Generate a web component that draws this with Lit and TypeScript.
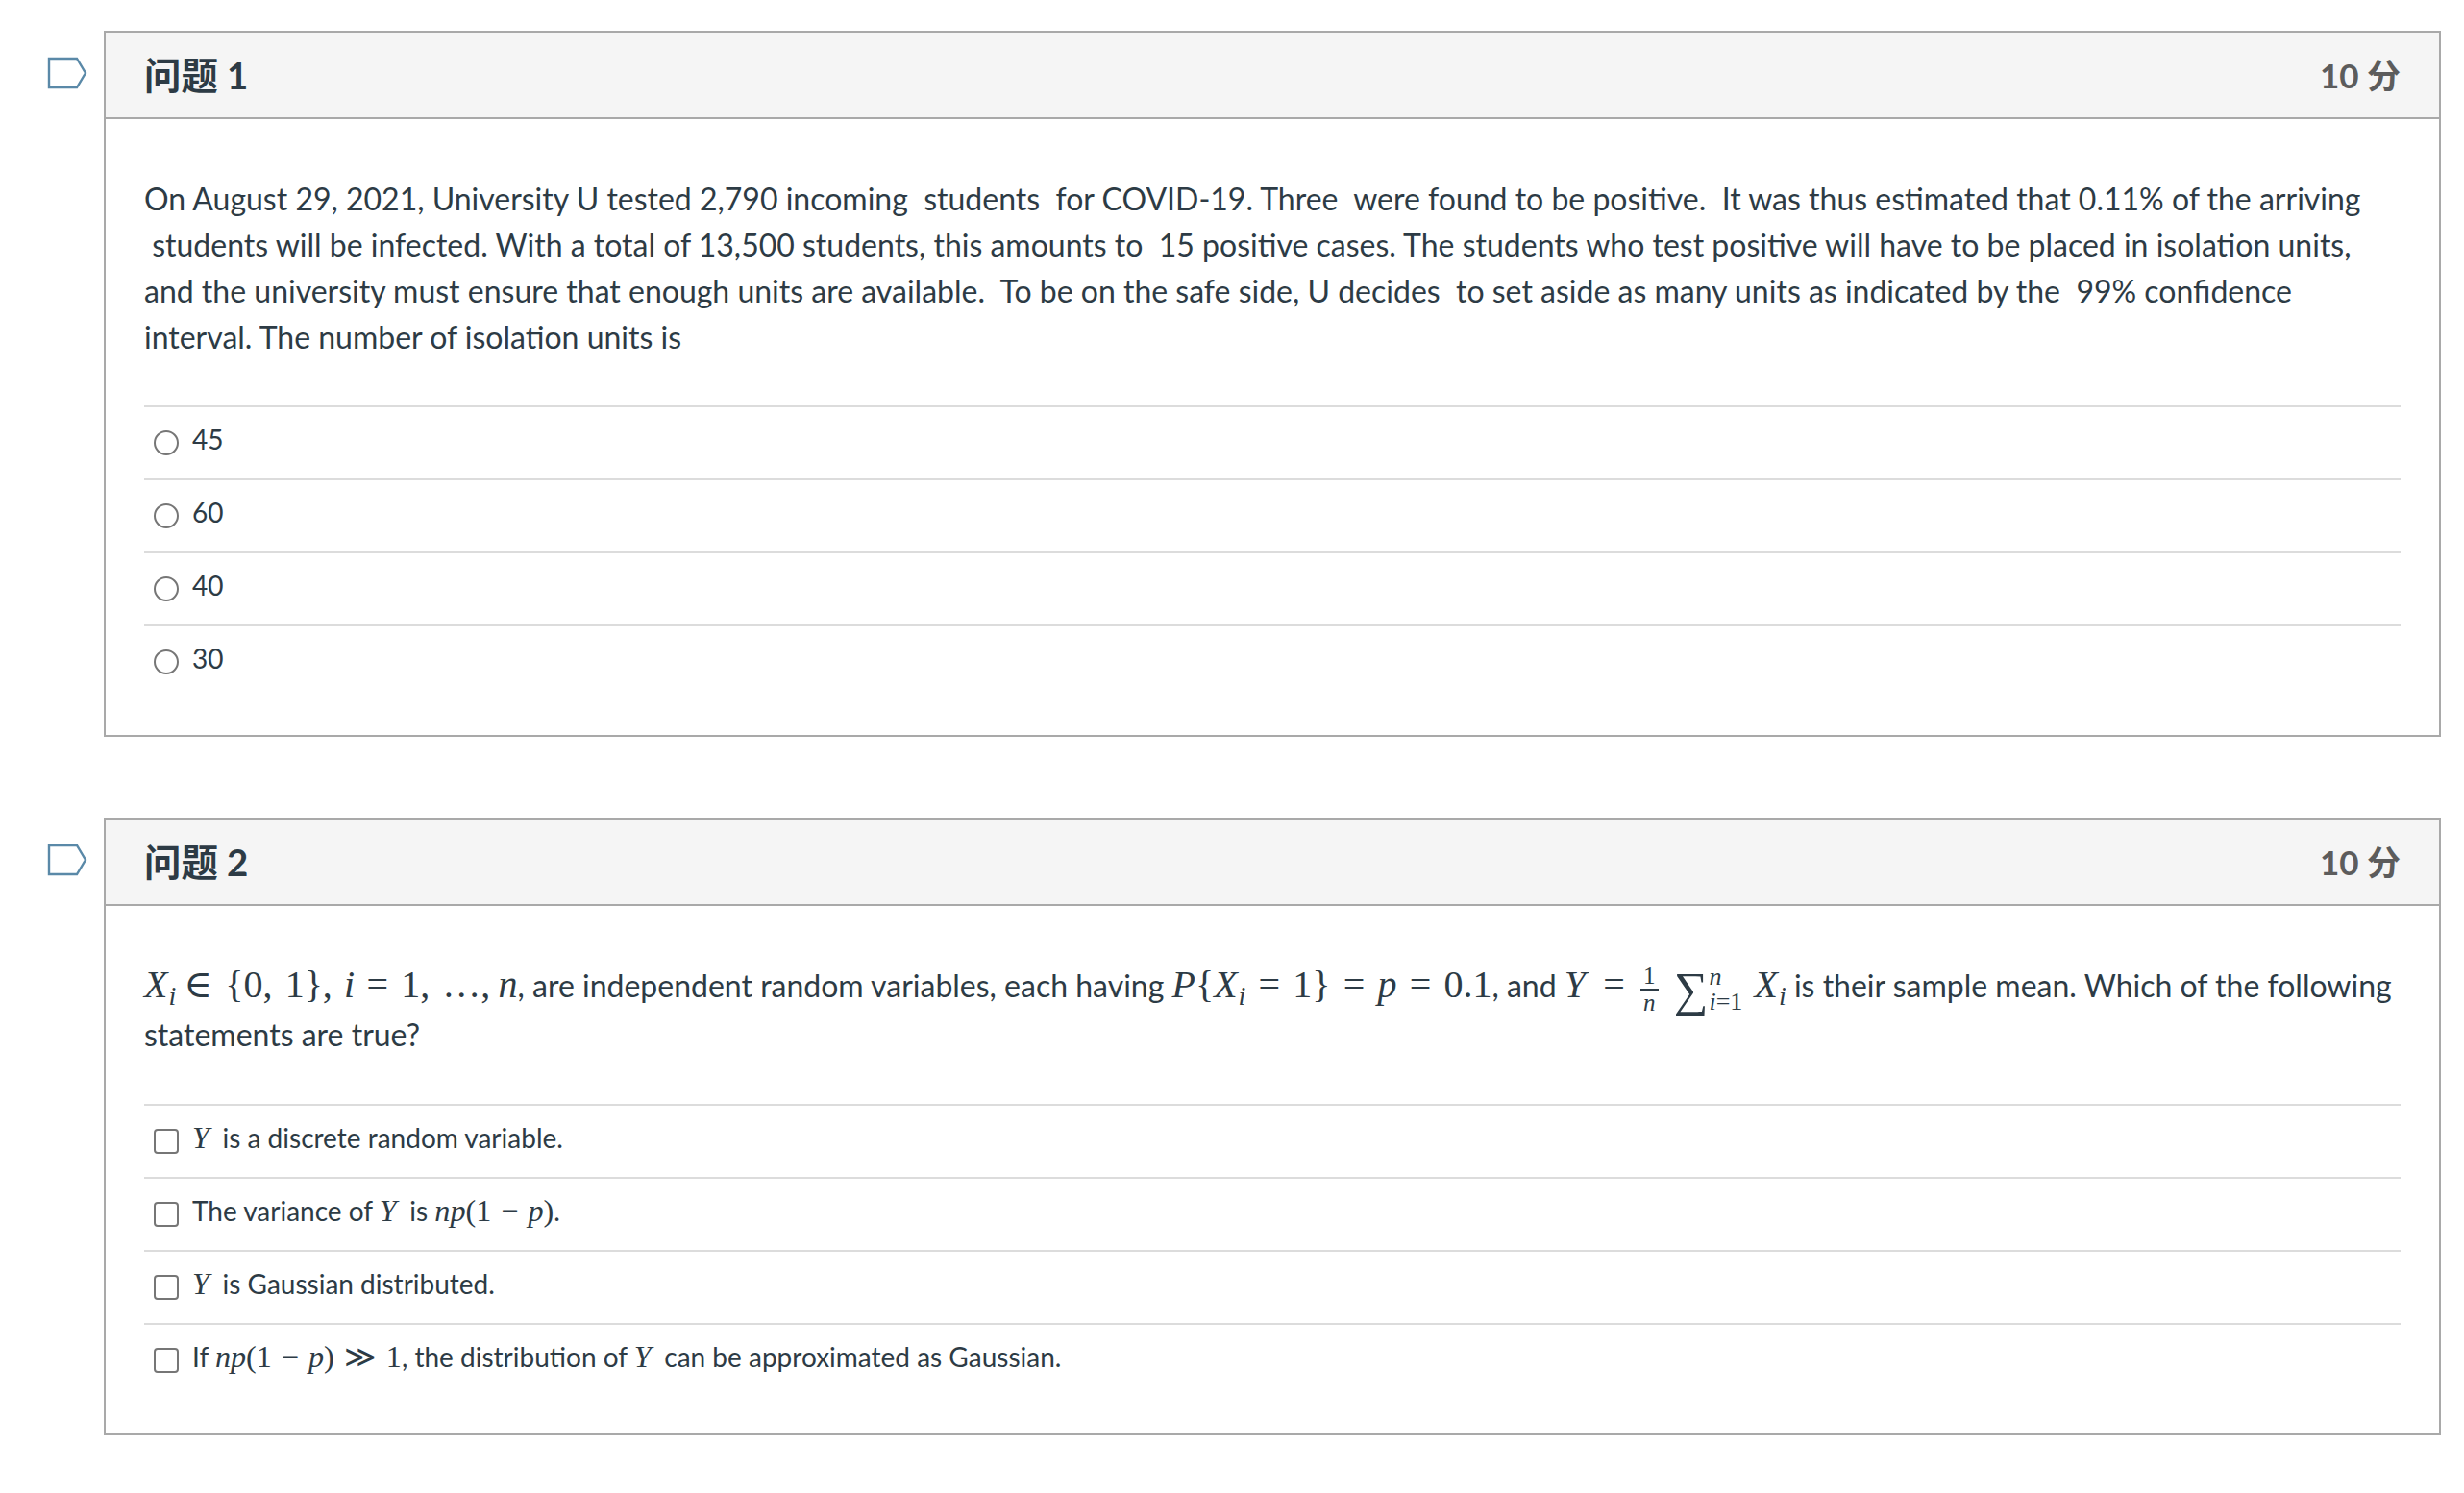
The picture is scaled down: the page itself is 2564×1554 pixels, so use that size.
import { LitElement, html, css, TemplateResult } from "lit";
import { customElement } from "lit/decorators.js";

const v = (s: string) => html`<i class="mi">${s}</i>`;
const n = (s: string) => html`<span class="mn">${s}</span>`;
const xi = html`<span class="mn"><i>X</i><sub>i</sub></span>`;

interface Question {
  title: string;
  type: "radio" | "checkbox";
  body: TemplateResult;
  answers: TemplateResult[];
}

const QUESTIONS: Question[] = [
  {
    title: "问题 1",
    type: "radio",
    body: html`<p>
      On August 29, 2021, University U tested 2,790 incoming&nbsp; students&nbsp; for COVID-19. Three&nbsp; were found to be positive.&nbsp; It was thus estimated that 0.11% of the arriving
      &nbsp;students will be infected. With a total of 13,500 students, this amounts to&nbsp; 15 positive cases. The students who test positive will have to be placed in isolation units,
      and the university must ensure that enough units are available.&nbsp; To be on the safe side, U decides&nbsp; to set aside as many units as indicated by the&nbsp; 99% confidence
      interval. The number of isolation units is
    </p>`,
    answers: [html`45`, html`60`, html`40`, html`30`],
  },
  {
    title: "问题 2",
    type: "checkbox",
    body: html`<p class="math-p">
      ${xi} ${n("∈ {0, 1},")}&nbsp;<i class="mi lead">i</i> ${n("= 1, …,")} <span class="mn"><i>n</i></span>, are independent random variables, each having
      <span class="mn"><i>P</i>{<i>X</i><sub>i</sub> = 1} = <i>p</i> = 0.1</span>, and <i class="mi wide">Y</i> ${n("=")}
      <span class="frac"><span>1</span><span class="den">n</span></span>
      <span class="sum"><span class="sigma">∑</span><span class="lim"><sup>n</sup><sub><i>i</i>=1</sub></span></span>
      ${xi} is their sample mean. Which of the following statements are true?
    </p>`,
    answers: [
      html`${v("Y")} is a discrete random variable.`,
      html`The variance of ${v("Y")} is <span class="mn"><i>np</i>(1 − <i>p</i>)</span>.`,
      html`${v("Y")} is Gaussian distributed.`,
      html`If <span class="mn"><i>np</i>(1 − <i>p</i>) ≫ 1</span>, the distribution of ${v("Y")} can be approximated as Gaussian.`,
    ],
  },
];

@customElement("app-root")
export class AppRoot extends LitElement {
  static styles = css`
    :host {
      display: block;
      min-height: 1554px;
      background: #fff;
      color: #2d3b45;
      font-family: Lato, "Noto Sans CJK SC", sans-serif;
      box-sizing: border-box;
      padding: 32px 24px 0 0;
    }
    .question {
      display: flex;
      margin-bottom: 84px;
    }
    .gutter {
      flex: 0 0 108px;
      padding: 27px 0 0 49px;
      box-sizing: border-box;
    }
    .gutter svg {
      display: block;
    }
    .card {
      flex: 1;
      min-width: 0;
      border: 2px solid #a9a9a9;
      padding-bottom: 39px;
    }
    .head {
      display: flex;
      justify-content: space-between;
      align-items: center;
      height: 90px;
      box-sizing: border-box;
      padding: 0 40px;
      background: #f5f5f5;
      border-bottom: 2px solid #a9a9a9;
    }
    .title {
      font-size: 38.4px;
      font-weight: 700;
      margin-bottom: 5px;
    }
    .score {
      font-size: 35px;
      font-weight: 700;
      color: #5c5c5c;
      margin-bottom: 3px;
    }
    .text {
      padding: 59px 40px 0;
    }
    p {
      margin: 0 0 47px;
      font-size: 32px;
      line-height: 48px;
    }
    .math-p {
      line-height: 51px;
      margin-top: -3px;
    }
    .answers {
      padding: 0 40px;
    }
    .answer {
      display: flex;
      align-items: center;
      height: 76px;
      box-sizing: border-box;
      border-top: 2px solid #dcdcdc;
      padding-left: 10px;
      font-size: 28px;
    }
    input {
      appearance: none;
      flex: none;
      width: 26px;
      height: 26px;
      margin: 0 14px 0 0;
      border: 2px solid #767676;
      background: #fff;
    }
    input[type="radio"] {
      border-radius: 50%;
    }
    input[type="checkbox"] {
      border-radius: 4px;
    }
    .label {
      margin-bottom: 8px;
    }
    .mi,
    .mn {
      font-family: "Liberation Serif", "DejaVu Serif", serif;
      font-size: 1.15em;
      word-spacing: 0.06em;
    }
    .mi {
      padding-right: 0.2em;
    }
    .math-p .mi,
    .math-p .mn {
      font-size: 1.25em;
      word-spacing: 0.08em;
    }
    .math-p .mi {
      padding-right: 0.1em;
    }
    .math-p .mi.lead {
      margin-left: 4px;
    }
    .math-p .mi.wide {
      padding-right: 0.25em;
    }
    sub {
      font-size: 0.7em;
      font-style: italic;
      line-height: 0;
      vertical-align: -0.3em;
      margin-left: 1px;
    }
    .frac {
      display: inline-flex;
      flex-direction: column;
      align-items: center;
      vertical-align: middle;
      font-family: "Liberation Serif", serif;
      font-size: 25px;
      line-height: 26px;
      margin: -8px 8px;
    }
    .den {
      border-top: 2px solid #2d3b45;
      font-style: italic;
      padding: 0 3px;
    }
    .sum {
      display: inline-flex;
      align-items: center;
      vertical-align: middle;
      font-family: "Liberation Serif", serif;
      line-height: 1;
      margin: -8px 4px -8px 0;
    }
    .sigma {
      font-size: 50px;
    }
    .lim {
      display: inline-flex;
      flex-direction: column;
      font-size: 26px;
      line-height: 26px;
      margin-left: 1px;
    }
    .lim sup,
    .lim sub {
      all: unset;
    }
    .lim sup {
      font-style: italic;
    }
  `;

  render() {
    return QUESTIONS.map(
      (q) => html`
        <section class="question">
          <div class="gutter">
            <svg width="42" height="34" viewBox="0 0 42 34" fill="none">
              <path d="M2 2H31L40 17L31 32H2Z" stroke="#5a89a8" stroke-width="2.4" />
            </svg>
          </div>
          <div class="card">
            <div class="head">
              <span class="title">${q.title}</span>
              <span class="score">10 分</span>
            </div>
            <div class="text">${q.body}</div>
            <div class="answers">
              ${q.answers.map(
                (a) => html`<label class="answer">
                  <input type=${q.type} name=${q.title} />
                  <span class="label">${a}</span>
                </label>`,
              )}
            </div>
          </div>
        </section>
      `,
    );
  }
}
